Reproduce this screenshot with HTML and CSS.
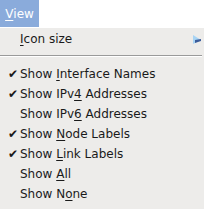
FILE: index.html
```html
<!DOCTYPE html>
<html>
<head><link rel="stylesheet" href="styles.css"></head>
<body>
<div class="bar"><div class="top"><u>V</u>iew</div></div>
<div class="menu">
  <div class="item"><span class="chk"></span><span class="lbl"><u>I</u>con size</span>
    <svg class="arrow" width="9" height="9" viewBox="0 0 9 9"><polygon points="0,0 8,5 0,9" fill="#a8d4f4"/><polygon points="2,5 8,4 8,6 2,8" fill="#3b5c9a"/></svg></div>
  <div class="sep"></div>
  <div class="item"><span class="chk">✔</span><span class="lbl">Show <u>I</u>nterface Names</span></div>
  <div class="item"><span class="chk">✔</span><span class="lbl">Show IPv<u>4</u> Addresses</span></div>
  <div class="item"><span class="chk"></span><span class="lbl">Show IPv<u>6</u> Addresses</span></div>
  <div class="item"><span class="chk">✔</span><span class="lbl">Show <u>N</u>ode Labels</span></div>
  <div class="item"><span class="chk">✔</span><span class="lbl">Show <u>L</u>ink Labels</span></div>
  <div class="item"><span class="chk"></span><span class="lbl">Show <u>A</u>ll</span></div>
  <div class="item"><span class="chk"></span><span class="lbl">Show N<u>o</u>ne</span></div>
</div>
</body>
</html>
```
FILE: styles.css
```css
html, body { margin: 0; padding: 0; background: #fff; }
body { font-family: "DejaVu Sans", sans-serif; font-size: 12px; color: #1a1a1a; width: 208px; height: 209px; overflow: hidden; }
u { text-decoration-thickness: 1px; text-underline-offset: 2px; }
.bar { height: 27px; display: flex; }
.top { width: 39px; background: #8aabdb; color: #fff; display: flex; align-items: center; justify-content: center; font-size: 12px; padding-top: 1px; box-sizing: border-box; }
.menu { margin-top: 1px; padding-top: 1px; box-sizing: border-box; width: 204px; height: 181px; background: #edecea; display: flex; flex-direction: column; }
.item { display: flex; align-items: center; height: 20px; position: relative; flex: none; }
.chk { width: 20px; flex: none; font-size: 12px; text-align: right; padding-right: 2px; box-sizing: border-box; }
.arrow { position: absolute; right: 2px; top: 6px; }
.sep { height: 1px; background: #9a9a9a; margin: 6px 2px 7px 0; border-bottom: 1px solid #fff; flex: none; }
```
